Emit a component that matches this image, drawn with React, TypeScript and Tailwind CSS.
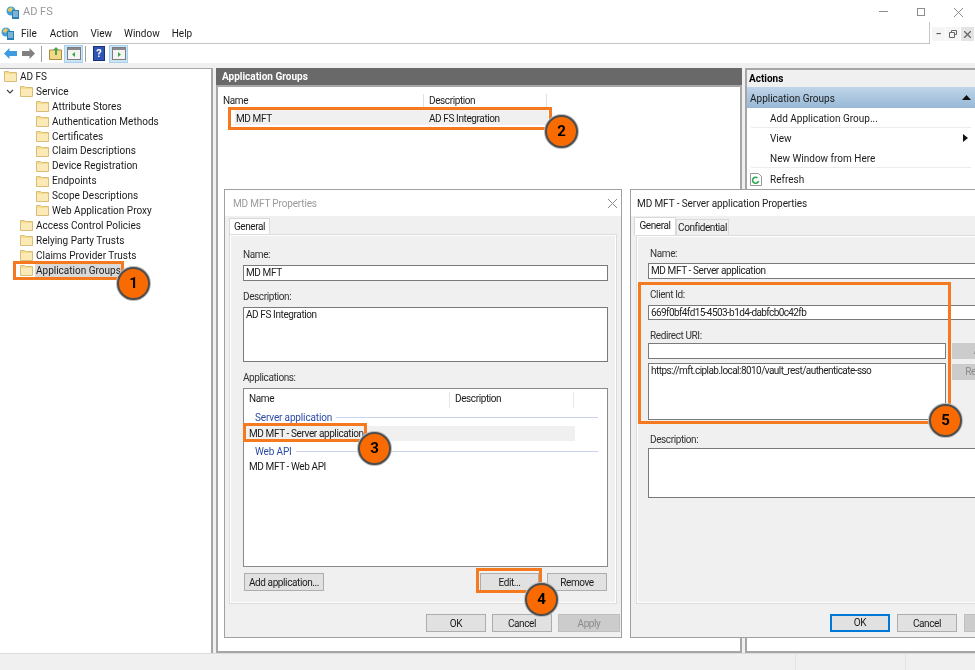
const TREE = [
  { label: "AD FS", depth: 0 },
  { label: "Service", depth: 1, open: true },
  { label: "Attribute Stores", depth: 2 },
  { label: "Authentication Methods", depth: 2 },
  { label: "Certificates", depth: 2 },
  { label: "Claim Descriptions", depth: 2 },
  { label: "Device Registration", depth: 2 },
  { label: "Endpoints", depth: 2 },
  { label: "Scope Descriptions", depth: 2 },
  { label: "Web Application Proxy", depth: 2 },
  { label: "Access Control Policies", depth: 1 },
  { label: "Relying Party Trusts", depth: 1 },
  { label: "Claims Provider Trusts", depth: 1 },
  { label: "Application Groups", depth: 1, selected: true },
];

function Folder() {
  return (
    <svg width="13" height="12" viewBox="0 0 13 12" className="shrink-0">
      <path d="M0.5 1.5h4l1 1h7v9h-12z" fill="#f6dc8e" stroke="#d8bd78" />
      <path d="M1 4h11v7H1z" fill="#fbeab5" />
    </svg>
  );
}

function AppIcon() {
  return (
    <svg width="14" height="14" viewBox="0 0 14 14" className="shrink-0">
      <circle cx="5" cy="5" r="4.5" fill="#3f9fd8" />
      <path d="M2 3l3-2 2 2-2 3-3-1z" fill="#e8c45a" />
      <rect x="6" y="4" width="7" height="9" fill="#2a7fb5" />
      <path d="M7 6h5M7 8h5M7 10h5" stroke="#cfe8f5" />
    </svg>
  );
}

function PaneIcon({ side, className }: { side: "left" | "right"; className: string }) {
  return (
    <div className={`w-[19px] h-[18px] bg-[#cce4f7] border border-[#a8d0ef] flex items-center justify-center ${className}`}>
      <svg width="14" height="13" viewBox="0 0 14 13">
        <rect x="0.5" y="0.5" width="13" height="12" fill="#f4f4f4" stroke="#7d7d7d" />
        <rect x="1" y="1" width="12" height="2" fill="#8a8a8a" />
        {side === "left" ? (
          <path d="M8 5v5L5 7.5z" fill="#3aa845" />
        ) : (
          <path d="M6 5v5l3-2.500z" fill="#3aa845" />
        )}
      </svg>
    </div>
  );
}

function Toolbar() {
  return (
    <div className="h-[19px] bg-white flex items-center pl-[4px] shrink-0">
      <svg width="13" height="11" viewBox="0 0 13 11">
        <path d="M0 5.500L5.500 0v3H13v5H5.500v3z" fill="#3d9be0" />
      </svg>
      <svg width="13" height="11" viewBox="0 0 13 11" className="ml-[5px]">
        <path d="M13 5.500L7.500 0v3H0v5h7.500v3z" fill="#808080" />
      </svg>
      <div className="w-px h-[16px] bg-[#a0a0a0] ml-[6px]" />
      <svg width="13" height="13" viewBox="0 0 13 13" className="ml-[7px]">
        <path d="M0.500 3h12v9.500h-12z" fill="#f3d987" stroke="#a98d45" />
        <path d="M6 8V3H4l3-3 3 3H8v5z" fill="#4aa54e" />
      </svg>
      <PaneIcon side="left" className="ml-[2px]" />
      <div className="w-px h-[16px] bg-[#a0a0a0] ml-[2px]" />
      <div className="w-[12px] h-[15px] bg-[#2f55b5] border border-[#1c2f77] text-white text-[11px] font-bold leading-[13px] text-center ml-[7px]">
        ?
      </div>
      <PaneIcon side="right" className="ml-[4px]" />
    </div>
  );
}

function Tree() {
  return (
    <div className="w-[213px] border-t border-r-2 border-[#a6a6a6] bg-white shrink-0">
      {TREE.map((t) => (
        <div key={t.label} className="h-[14.9px] flex items-center relative">
          {t.open && (
            <svg width="8" height="6" viewBox="0 0 8 6" className="absolute left-[6px] top-[5px]">
              <path d="M1 1l3 3 3-3" fill="none" stroke="#444" strokeWidth="1.200" />
            </svg>
          )}
          <div className={t.depth === 0 ? "ml-[4px]" : t.depth === 1 ? "ml-[20px]" : "ml-[36px]"}>
            <Folder />
          </div>
          <span className={`ml-[2px] pl-px pr-[2px] leading-[15px] ${t.selected ? "bg-[#d9d9d9]" : ""}`}>{t.label}</span>
        </div>
      ))}
    </div>
  );
}

function CenterPane() {
  return (
    <div className="w-[526px] ml-[3px] flex flex-col shrink-0">
      <div className="h-[17px] bg-[#696969] text-white font-bold pl-[6px] leading-[18px] shrink-0">
        Application Groups
      </div>
      <div className="flex-1 border-2 border-[#a6a6a6] bg-white tracking-[-0.4px]">
        <div className="flex h-[20px] pt-[7px] text-[#222]">
          <span className="w-[206px] pl-[5px] border-r border-[#e0e0e0] leading-[14px]">Name</span>
          <span className="w-[123px] pl-[5px] border-r border-[#e0e0e0] leading-[14px]">Description</span>
        </div>
        <div className="flex h-[15px] ml-[17px] w-[313px] bg-[#f0f0f0] leading-[15px] pt-px mt-[3px]">
          <span className="w-[194px] pl-px">MD MFT</span>
          <span>AD FS Integration</span>
        </div>
      </div>
    </div>
  );
}

function ActionRow({ label, arrow, icon, line }: { label: string; arrow?: boolean; icon?: boolean; line?: boolean }) {
  return (
    <div className={`h-[20px] flex items-center mx-[4px] relative pl-[19px] pt-px ${line ? "border-b border-[#ececec]" : ""}`}>
      {icon && (
        <svg width="12" height="13" viewBox="0 0 12 13" className="absolute left-[-1px] top-[4px]">
          <path d="M0.500 0.500h8l3 3v9h-11z" fill="#fff" stroke="#9a9a9a" />
          <path d="M8.500 8a3 3 0 1 1-1-3" fill="none" stroke="#35a853" strokeWidth="1.600" />
        </svg>
      )}
      <span>{label}</span>
      {arrow && (
        <svg width="5" height="8" viewBox="0 0 5 8" className="absolute right-[3px] top-[6px]">
          <path d="M0 0l5 4-5 4z" fill="#111" />
        </svg>
      )}
    </div>
  );
}

function ActionsPane() {
  return (
    <div className="flex-1 ml-[3px] border-2 border-r-0 border-[#a6a6a6] bg-white">
      <div className="h-[17px] bg-[#f0f0f0] font-bold pl-[2px] leading-[17px] text-black">Actions</div>
      <div className="h-[21px] bg-gradient-to-b from-[#c0d5e8] to-[#97b8d6] flex items-center pl-[3px] pt-px relative">
        <span>Application Groups</span>
        <svg width="9" height="5" viewBox="0 0 9 5" className="absolute right-[4px] top-[8px]">
          <path d="M0 5l4.500-5L9 5z" fill="#111" />
        </svg>
      </div>
      <ActionRow label="Add Application Group..." line />
      <ActionRow label="View" arrow />
      <ActionRow label="New Window from Here" line />
      <div className="mt-px">
        <ActionRow label="Refresh" icon />
      </div>
    </div>
  );
}

function WinButton({ label, className }: { label: string; className: string }) {
  return (
    <button className={`h-[18px] bg-[#e1e1e1] border border-[#adadad] text-center leading-[15px] whitespace-nowrap shrink-0 ${className}`}>
      {label}
    </button>
  );
}

function Input({ value, className }: { value?: string; className: string }) {
  return (
    <div className={`bg-white border border-[#7a7a7a] pl-[2px] leading-[14px] text-[#222] whitespace-nowrap ${className}`}>{value}</div>
  );
}

function Label({ text, className }: { text: string; className: string }) {
  return <div className={`h-[14px] leading-[14px] text-[#333] ${className}`}>{text}</div>;
}

function GroupHead({ label, lineClass }: { label: string; lineClass: string }) {
  return (
    <div className={`flex items-center h-[14px] pl-[11px] text-[#2c4aa8] tracking-[-0.15px] ${lineClass}`}>
      <span>{label}</span>
      <div className="flex-1 h-px bg-[#c9d3ee] ml-[4px] mr-[9px]" />
    </div>
  );
}

function MainDialog() {
  return (
    <div className="absolute left-[224px] top-[189px] w-[398px] h-[449px] bg-[#f0f0f0] border border-[#a0a0a0] flex flex-col tracking-[-0.4px]">
      <div className="h-[26px] bg-white flex items-center pl-[8px] pr-[4px] justify-between shrink-0">
        <span className="text-[#9a9a9a] pt-[1px] tracking-[-0.15px]">MD MFT Properties</span>
        <svg width="9" height="9" viewBox="0 0 9 9">
          <path d="M0 0l9 9M9 0L0 9" stroke="#8c8c8c" />
        </svg>
      </div>
      <div className="h-[18px] pl-[4px] shrink-0 pt-[2px]">
        <div className="w-[41px] h-[17px] bg-white border border-b-0 border-[#d9d9d9] text-center leading-[15px]">General</div>
      </div>
      <div className="mx-[4px] h-[370px] border border-[#dcdcdc] shadow-[inset_0_0_0_1px_#fff] pl-[13px] pr-[8px]">
        <Label text="Name:" className="mt-[13px]" />
        <Input value="MD MFT" className="h-[16px] mt-[3px]" />
        <Label text="Description:" className="mt-[9px]" />
        <Input value="AD FS Integration" className="h-[55px] mt-[3px]" />
        <Label text="Applications:" className="mt-[9px]" />
        <div className="h-[179px] mt-[3px] bg-white border border-[#8a8a8a]">
          <div className="flex h-[18px] pt-[2px] mt-[1px]">
            <span className="w-[206px] pl-[5px] border-r border-[#e6e6e6] leading-[14px]">Name</span>
            <span className="w-[124px] pl-[5px] border-r border-[#e6e6e6] leading-[14px]">Description</span>
          </div>
          <GroupHead label="Server application" lineClass="mt-[2px]" />
          <div className="h-[15px] w-[331px] bg-[#f0f0f0] pl-[5px] leading-[15px] mt-[2px]">MD MFT - Server application</div>
          <GroupHead label="Web API" lineClass="mt-[3px]" />
          <div className="h-[15px] pl-[5px] leading-[15px] mt-[1px]">MD MFT - Web API</div>
        </div>
        <div className="flex mt-[6px] pl-px">
          <WinButton label="Add application..." className="w-[80px]" />
          <WinButton label="Edit..." className="w-[59px] ml-auto" />
          <WinButton label="Remove" className="w-[60px] ml-[8px] mr-px" />
        </div>
      </div>
      <div className="flex justify-end gap-[6px] pr-[1px] mt-[10px]">
        <WinButton label="OK" className="w-[60px]" />
        <WinButton label="Cancel" className="w-[60px]" />
        <WinButton label="Apply" className="w-[62px] !bg-[#cccccc] !border-[#bfbfbf] text-[#8a8a8a]" />
      </div>
    </div>
  );
}

function ServerDialog() {
  return (
    <div className="absolute left-[630px] top-[189px] w-[400px] h-[449px] bg-[#f0f0f0] border border-[#a0a0a0] flex flex-col tracking-[-0.4px]">
      <div className="h-[26px] bg-white flex items-center pl-[6px] shrink-0">
        <span className="text-[#222] pt-[1px] tracking-[-0.1px]">MD MFT - Server application Properties</span>
      </div>
      <div className="h-[19px] pl-[3px] flex items-end shrink-0">
        <div className="w-[42px] h-[18px] bg-white border border-b-0 border-[#d9d9d9] text-center leading-[15px]">General</div>
        <div className="w-[53px] h-[16px] bg-[#f0f0f0] border border-b-0 border-[#d9d9d9] text-center leading-[15px]">Confidential</div>
      </div>
      <div className="ml-[5px] h-[369px] border border-[#dcdcdc] shadow-[inset_0_0_0_1px_#fff] pl-[11px]">
        <Label text="Name:" className="mt-[11px] pl-[2px]" />
        <Input value="MD MFT - Server application" className="h-[16px] mt-[2px]" />
        <Label text="Client Id:" className="mt-[9px] pl-[2px]" />
        <Input value="669f0bf4fd15-4503-b1d4-dabfcb0c42fb" className="h-[15px] mt-[3px] tracking-[-0.6px]" />
        <Label text="Redirect URI:" className="mt-[9px] pl-[2px]" />
        <div className="flex">
          <div className="w-[298px]">
            <Input className="h-[16px]" />
            <Input value="https://mft.ciplab.local:8010/vault_rest/authenticate-sso" className="h-[57px] mt-[4px] tracking-[-0.55px]" />
          </div>
          <div className="ml-[6px] w-[60px]">
            <button className="h-[16px] w-full bg-[#cccccc] text-[#8a8a8a] leading-[14px]">Add</button>
            <button className="h-[16px] w-full mt-[5px] bg-[#cccccc] text-[#8a8a8a] leading-[14px]">Remove</button>
          </div>
        </div>
        <Label text="Description:" className="mt-[13px] pl-[2px]" />
        <Input className="h-[50px] mt-[1px]" />
      </div>
      <div className="flex gap-[7px] pl-[199px] mt-[10px]">
        <button className="h-[18px] w-[60px] bg-[#e1e1e1] border-2 border-[#0078d7] leading-[14px]">OK</button>
        <WinButton label="Cancel" className="w-[60px]" />
        <WinButton label="Apply" className="w-[60px] !bg-[#cccccc] !border-[#bfbfbf] text-[#8a8a8a]" />
      </div>
    </div>
  );
}

function Callout({ n, className }: { n: number; className: string }) {
  return (
    <div className={`absolute w-[33px] h-[33px] rounded-full bg-[#f96b00] border-2 border-[#4d4d4d] shadow-[0_0_0_1px_#bdbdbd] flex items-center justify-center text-black font-bold text-[15px] ${className}`}>
      {n}
    </div>
  );
}

function Box({ className }: { className: string }) {
  return <div className={`absolute border-[3px] border-[#f5791f] ${className}`} />;
}

export default function App() {
  return (
    <div className="relative w-[975px] h-[670px] overflow-hidden bg-white text-[10px] text-[#1a1a1a] flex flex-col blur-[0.3px] font-['Roboto',sans-serif]">
      <div className="h-[22px] flex items-center pl-[6px] pt-[3px] shrink-0 relative">
        <AppIcon />
        <span className="ml-[3px] text-[11px] text-[#999]">AD FS</span>
        <div className="absolute left-[879px] top-[11px] w-[9px] h-px bg-[#8c8c8c]" />
        <div className="absolute left-[917px] top-[8px] w-[8px] h-[8px] border border-[#8c8c8c]" />
        <svg width="9" height="9" viewBox="0 0 9 9" className="absolute left-[954px] top-[8px]">
          <path d="M0 0l9 9M9 0L0 9" stroke="#8c8c8c" />
        </svg>
      </div>
      <div className="h-[22px] flex shrink-0 bg-white">
        <div className="w-[930px] h-[22px] border-b border-r border-[#c4c4c4] flex items-center pl-[1px] pt-[2px]">
          <AppIcon />
          <span className="ml-[6px]">File</span>
          <span className="ml-[13px]">Action</span>
          <span className="ml-[12px]">View</span>
          <span className="ml-[12px]">Window</span>
          <span className="ml-[12px]">Help</span>
        </div>
        <div className="flex items-start pt-[5px] pl-[2px] gap-[1px]">
          <div className="w-[13px] h-[14px] bg-[#f5f5f5] text-center leading-[14px] text-[9px] font-bold text-[#555]">–</div>
          <div className="w-[14px] h-[14px] bg-[#f5f5f5] flex items-center justify-center">
            <svg width="8" height="8" viewBox="0 0 8 8">
              <path d="M2.500 2V.5h5v4H6M.5 2.500h5v5h-5z" fill="none" stroke="#666" />
            </svg>
          </div>
          <div className="w-[13px] h-[14px] bg-[#e4e4e4] flex items-center justify-center">
            <svg width="7" height="7" viewBox="0 0 7 7">
              <path d="M0 0l7 7M7 0L0 7" stroke="#666" strokeWidth="1.300" />
            </svg>
          </div>
        </div>
      </div>
      <Toolbar />
      <div className="flex-1 flex bg-[#f0f0f0] min-h-0 pt-[5px]">
        <Tree />
        <CenterPane />
        <ActionsPane />
      </div>
      <div className="h-[17px] bg-[#f0f0f0] border-t border-[#dcdcdc] flex shrink-0">
        <div className="w-[796px] border-r border-[#e4e4e4]" />
        <div className="w-[110px] border-r border-[#e4e4e4]" />
      </div>

      <MainDialog />
      <ServerDialog />

      <Box className="left-[13px] top-[261px] w-[111px] h-[19px]" />
      <Box className="left-[228px] top-[107px] w-[324px] h-[23px]" />
      <Box className="left-[243px] top-[423px] w-[124px] h-[19px]" />
      <Box className="left-[476px] top-[568px] w-[66px] h-[25px]" />
      <Box className="left-[638px] top-[282px] w-[313px] h-[142px]" />

      <Callout n={1} className="left-[117px] top-[267px]" />
      <Callout n={2} className="left-[545px] top-[115px]" />
      <Callout n={3} className="left-[358px] top-[432px]" />
      <Callout n={4} className="left-[525px] top-[583px]" />
      <Callout n={5} className="left-[929px] top-[404px]" />
    </div>
  );
}
